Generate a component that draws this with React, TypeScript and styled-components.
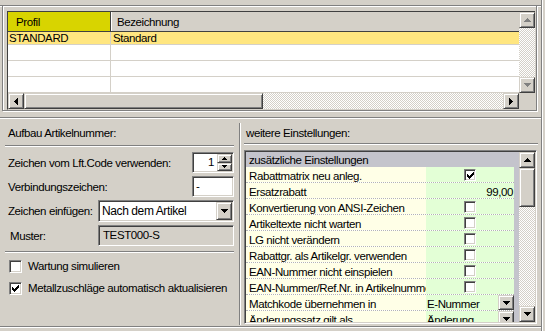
import React from "react";
import styled, { createGlobalStyle, css } from "styled-components";

const GlobalStyle = createGlobalStyle`
  *, *::before, *::after { box-sizing: border-box; }
  html, body { margin: 0; padding: 0; background: #d4d0c8; }
  body { font-family: "Liberation Sans", Arial, sans-serif; }
`;

// klassische Win-Rahmen
const raised = css`
  border: 1px solid;
  border-color: #d4d0c8 #404040 #404040 #d4d0c8;
  box-shadow: inset 1px 1px 0 #fff, inset -1px -1px 0 #808080;
  background: #d4d0c8;
`;

const sunken = css`
  border: 1px solid;
  border-color: #808080 #fff #fff #808080;
  box-shadow: inset 1px 1px 0 #404040, inset -1px -1px 0 #d4d0c8;
`;

const hatch = css`
  background: repeating-conic-gradient(#fff 0 25%, #d4d0c8 0 50%) 0 0 / 2px 2px;
`;

const Screen = styled.div`
  width: 545px;
  height: 331px;
  overflow: hidden;
  background: #d4d0c8;
  font-size: 11.5px;
  letter-spacing: -0.4px;
  color: #000;
`;

const Frame = styled.div`
  width: 542px;
  height: 331px;
  border-right: 1px solid #808080;
  box-shadow: 1px 0 0 #fff;
  display: flex;
  flex-direction: column;
`;

const TopStrip = styled.div`
  height: 6px;
  flex-shrink: 0;
  border-bottom: 1px solid #808080;
  box-shadow: 0 1px 0 #fff;
`;

const TopGroup = styled.div`
  margin-left: 2px;
  width: 535px;
  height: 105px;
  flex-shrink: 0;
  padding: 5px 1px 0 4px;
  border: 1px solid #808080;
  border-top: none;
  box-shadow: inset 1px 0 0 #fff, 1px 1px 0 #fff;
`;

const ProfileGrid = styled.div`
  width: 528px;
  height: 99px;
  display: flex;
  border-left: 1px solid #404040;
  border-top: 1px solid #404040;
  border-bottom: 1px solid #d4d0c8;
`;

const GridMain = styled.div`
  width: 511px;
  display: flex;
  flex-direction: column;
`;

const HeaderRow = styled.div`
  height: 20px;
  display: flex;
  border-bottom: 1px solid #404040;
`;

const HeaderCell = styled.div<{ $active?: boolean }>`
  display: flex;
  align-items: center;
  ${(p) =>
    p.$active
      ? css`
          width: 103px;
          padding-left: 8px;
          background: #d8d400;
          border-right: 1px solid #404040;
        `
      : css`
          flex: 1;
          padding-left: 6px;
          background: #d4d0c8;
          box-shadow: inset 1px 0 0 #fff;
        `}
`;

const DataRow = styled.div<{ $selected?: boolean; $h: number }>`
  height: ${(p) => p.$h}px;
  display: flex;
  background: ${(p) => (p.$selected ? "#ffe680" : "#fff")};
  border-bottom: 1px solid #d4d0c8;
`;

const DataCell = styled.div<{ $first?: boolean }>`
  line-height: 12px;
  white-space: nowrap;
  ${(p) =>
    p.$first
      ? css`
          width: 103px;
          padding-left: 1px;
          border-right: 1px solid #d4d0c8;
        `
      : css`
          flex: 1;
          padding-left: 2px;
        `}
`;

const HScroll = styled.div`
  height: 16px;
  display: flex;
`;

const ScrollBtn = styled.div`
  ${raised};
  width: 16px;
  height: 16px;
  flex-shrink: 0;
  display: flex;
  align-items: center;
  justify-content: center;
`;

const Thumb = styled.div<{ $len: number; $vertical?: boolean }>`
  ${raised};
  flex-shrink: 0;
  ${(p) => (p.$vertical ? `height: ${p.$len}px;` : `width: ${p.$len}px;`)}
`;

const Track = styled.div`
  ${hatch};
  flex: 1;
`;

const VScrollCol = styled.div`
  width: 16px;
  display: flex;
  flex-direction: column;
`;

const Corner = styled.div`
  height: 16px;
  background: #d4d0c8;
`;

const EtchedLine = styled.div<{ $top: number }>`
  margin-top: ${(p) => p.$top}px;
  height: 2px;
  flex-shrink: 0;
  border-top: 1px solid #808080;
  border-bottom: 1px solid #fff;
`;

const BottomSection = styled.div`
  height: 207px;
  flex-shrink: 0;
  display: flex;
`;

const LeftPanel = styled.div`
  width: 239px;
  padding: 7px 5px 0 5px;
  display: flex;
  flex-direction: column;
`;

const RightPanel = styled.div`
  flex: 1;
  padding: 7px 0 0 3px;
  display: flex;
  flex-direction: column;
`;

const VDivider = styled.div`
  width: 2px;
  margin: 4px 0 1px;
  border-left: 1px solid #808080;
  border-right: 1px solid #fff;
`;

const PanelTitle = styled.div<{ $indent: number }>`
  line-height: 14px;
  padding-left: ${(p) => p.$indent}px;
`;

const Separator = styled.div<{ $top: number; $width?: number }>`
  margin-top: ${(p) => p.$top}px;
  height: 2px;
  ${(p) => (p.$width ? `width: ${p.$width}px;` : "")}
  border-top: 1px solid #808080;
  border-bottom: 1px solid #fff;
`;

const Form = styled.div`
  margin-top: 5px;
  display: flex;
  flex-direction: column;
  gap: 3px;
`;

const FormRow = styled.div<{ $h: number }>`
  height: ${(p) => p.$h}px;
  display: flex;
  align-items: center;
  justify-content: space-between;
`;

const Label = styled.span<{ $indent?: number }>`
  padding-left: ${(p) => p.$indent ?? 3}px;
  white-space: nowrap;
`;

const SpinBox = styled.div`
  ${sunken};
  width: 42px;
  height: 21px;
  padding: 1px;
  background: #fff;
  display: flex;
`;

const SpinValue = styled.div`
  flex: 1;
  text-align: right;
  padding-right: 3px;
  line-height: 17px;
`;

const SpinButtons = styled.div`
  width: 15px;
  display: flex;
  flex-direction: column;
`;

const SpinBtn = styled.div`
  ${raised};
  flex: 1;
  display: flex;
  align-items: center;
  justify-content: center;
`;

const TextBox = styled.div<{ $width: number; $disabled?: boolean }>`
  ${sunken};
  width: ${(p) => p.$width}px;
  height: 21px;
  padding-left: ${(p) => (p.$disabled ? 4 : 3)}px;
  line-height: 19px;
  background: ${(p) => (p.$disabled ? "#d4d0c8" : "#fff")};
`;

const Combo = styled.div`
  ${sunken};
  width: 136px;
  height: 22px;
  padding: 1px;
  background: #fff;
  display: flex;
`;

const ComboText = styled.div`
  flex: 1;
  padding-left: 2px;
  line-height: 18px;
  font-size: 12px;
`;

const DropBtn = styled.div<{ $h: number }>`
  ${raised};
  width: 16px;
  height: ${(p) => p.$h}px;
  flex-shrink: 0;
  display: flex;
  align-items: center;
  justify-content: center;
`;

const CheckList = styled.div`
  margin-top: 2px;
  display: flex;
  flex-direction: column;
`;

const CheckRow = styled.div`
  height: 22px;
  padding-left: 4px;
  display: flex;
  align-items: center;
  gap: 6px;
  white-space: nowrap;
`;

const Box = styled.div<{ $size: number; $top?: number }>`
  ${sunken};
  width: ${(p) => p.$size}px;
  height: ${(p) => p.$size}px;
  margin-top: ${(p) => p.$top ?? 0}px;
  flex-shrink: 0;
  background: #fff;
  display: flex;
  align-items: center;
  justify-content: center;
`;

const SettingsGrid = styled.div`
  ${sunken};
  margin-top: 5px;
  width: 293px;
  height: 174px;
  padding: 1px;
  background: #c4c4cc;
  display: flex;
`;

const SettingsTable = styled.div`
  width: 268px;
  display: flex;
  flex-direction: column;
  overflow: hidden;
`;

const SettingsHeader = styled.div`
  height: 15px;
  flex-shrink: 0;
  padding-left: 3px;
  line-height: 17px;
  background: #c4c4cc;
  white-space: nowrap;
`;

const SettingsRow = styled.div`
  height: 16px;
  flex-shrink: 0;
  display: flex;
  background: #fff;
  border-bottom: 1px dotted #b4b4b4;
`;

const LabelCell = styled.div`
  width: 180px;
  padding-left: 3px;
  line-height: 19px;
  background: #ffffe7;
  white-space: nowrap;
  overflow: hidden;
`;

const ValueCell = styled.div<{ $kind: Kind }>`
  flex: 1;
  display: flex;
  align-items: flex-start;
  background: #e3ffd6;
  overflow: hidden;
  white-space: nowrap;
  line-height: 19px;
  justify-content: ${(p) =>
    p.$kind === "check" ? "center" : p.$kind === "number" ? "flex-end" : "space-between"};
  padding: ${(p) => (p.$kind === "number" ? "0 1px 0 0" : p.$kind === "select" ? "0 0 0 1px" : "0")};
`;

const Strip = styled.div`
  width: 5px;
`;

type Kind = "check" | "number" | "select";

type Setting = { label: string; kind: Kind; value?: string; checked?: boolean };

const settings: Setting[] = [
  { label: "Rabattmatrix neu anleg.", kind: "check", checked: true },
  { label: "Ersatzrabatt", kind: "number", value: "99,00" },
  { label: "Konvertierung von ANSI-Zeichen", kind: "check" },
  { label: "Artikeltexte nicht warten", kind: "check" },
  { label: "LG nicht verändern", kind: "check" },
  { label: "Rabattgr. als Artikelgr. verwenden", kind: "check" },
  { label: "EAN-Nummer nicht einspielen", kind: "check" },
  { label: "EAN-Nummer/Ref.Nr. in Artikelnummer", kind: "check" },
  { label: "Matchkode übernehmen in", kind: "select", value: "E-Nummer" },
  { label: "Änderungssatz gilt als", kind: "select", value: "Änderung" },
];

const profileRows = [
  { profil: "STANDARD", bez: "Standard", selected: true, h: 13 },
  { profil: "", bez: "", h: 16 },
  { profil: "", bez: "", h: 16 },
  { profil: "", bez: "", h: 16 },
];

// Pfeile pixelgenau
const arrowPaths = {
  up: { w: 7, h: 4, d: "M3 0h1v1h1v1h1v1h1v1H0V3h1V2h1V1h1z" },
  down: { w: 7, h: 4, d: "M0 0h7v1H6v1H5v1H4v1H3V3H2V2H1V1H0z" },
  left: { w: 4, h: 7, d: "M3 0h1v7H3V6H2V5H1V4H0V3h1V2h1V1h1z" },
  right: { w: 4, h: 7, d: "M0 0h1v1h1v1h1v1h1v1H3v1H2v1H1v1H0z" },
  upSmall: { w: 5, h: 3, d: "M2 0h1v1h1v1h1v1H0V2h1V1h1z" },
  downSmall: { w: 5, h: 3, d: "M0 0h5v1H4v1H3v1H2V2H1V1H0z" },
};

function Arrow({ dir, color = "#000" }: { dir: keyof typeof arrowPaths; color?: string }) {
  const a = arrowPaths[dir];
  return (
    <svg width={a.w} height={a.h} viewBox={`0 0 ${a.w} ${a.h}`} shapeRendering="crispEdges">
      <path d={a.d} fill={color} />
    </svg>
  );
}

function CheckMark() {
  return (
    <svg width="7" height="7" viewBox="0 0 7 7" shapeRendering="crispEdges">
      <path
        d="M6 0h1v3H6v1H5v1H4v1H3v1H2V6H1V5H0V2h1v1h1v1h1V3h1V2h1V1h1z"
        fill="#000"
      />
    </svg>
  );
}

function CheckBox({ checked, size = 13, top }: { checked?: boolean; size?: number; top?: number }) {
  return (
    <Box $size={size} $top={top}>
      {checked && <CheckMark />}
    </Box>
  );
}

export default function App() {
  return (
    <>
      <GlobalStyle />
      <Screen>
        <Frame>
          <TopStrip />
          <TopGroup>
            <ProfileGrid>
              <GridMain>
                <HeaderRow>
                  <HeaderCell $active>Profil</HeaderCell>
                  <HeaderCell>Bezeichnung</HeaderCell>
                </HeaderRow>
                {profileRows.map((r, i) => (
                  <DataRow key={i} $selected={r.selected} $h={r.h}>
                    <DataCell $first>{r.profil}</DataCell>
                    <DataCell>{r.bez}</DataCell>
                  </DataRow>
                ))}
                <HScroll>
                  <ScrollBtn>
                    <Arrow dir="left" />
                  </ScrollBtn>
                  <Thumb $len={239} />
                  <Track />
                  <ScrollBtn>
                    <Arrow dir="right" />
                  </ScrollBtn>
                </HScroll>
              </GridMain>
              <VScrollCol>
                <ScrollBtn>
                  <Arrow dir="up" color="#808080" />
                </ScrollBtn>
                <Track />
                <ScrollBtn>
                  <Arrow dir="down" color="#808080" />
                </ScrollBtn>
                <Corner />
              </VScrollCol>
            </ProfileGrid>
          </TopGroup>

          <EtchedLine $top={6} />

          <BottomSection>
            <LeftPanel>
              <PanelTitle $indent={3}>Aufbau Artikelnummer:</PanelTitle>
              <Separator $top={5} />
              <Form>
                <FormRow $h={21}>
                  <Label>Zeichen vom Lft.Code verwenden:</Label>
                  <SpinBox>
                    <SpinValue>1</SpinValue>
                    <SpinButtons>
                      <SpinBtn>
                        <Arrow dir="upSmall" />
                      </SpinBtn>
                      <SpinBtn>
                        <Arrow dir="downSmall" />
                      </SpinBtn>
                    </SpinButtons>
                  </SpinBox>
                </FormRow>
                <FormRow $h={21}>
                  <Label>Verbindungszeichen:</Label>
                  <TextBox $width={42}>-</TextBox>
                </FormRow>
                <FormRow $h={22}>
                  <Label>Zeichen einfügen:</Label>
                  <Combo>
                    <ComboText>Nach dem Artikel</ComboText>
                    <DropBtn $h={18}>
                      <Arrow dir="down" />
                    </DropBtn>
                  </Combo>
                </FormRow>
                <FormRow $h={21}>
                  <Label $indent={5}>Muster:</Label>
                  <TextBox $width={136} $disabled>
                    TEST000-S
                  </TextBox>
                </FormRow>
              </Form>
              <Separator $top={5} />
              <CheckList>
                <CheckRow>
                  <CheckBox />
                  Wartung simulieren
                </CheckRow>
                <CheckRow>
                  <CheckBox checked />
                  Metallzuschläge automatisch aktualisieren
                </CheckRow>
              </CheckList>
            </LeftPanel>

            <VDivider />

            <RightPanel>
              <PanelTitle $indent={2}>weitere Einstellungen:</PanelTitle>
              <Separator $top={3} $width={294} />
              <SettingsGrid>
                <SettingsTable>
                  <SettingsHeader>zusätzliche Einstellungen</SettingsHeader>
                  {settings.map((s) => (
                    <SettingsRow key={s.label}>
                      <LabelCell>{s.label}</LabelCell>
                      <ValueCell $kind={s.kind}>
                        {s.kind === "check" && <CheckBox checked={s.checked} size={12} top={2} />}
                        {s.kind === "number" && s.value}
                        {s.kind === "select" && (
                          <>
                            <span>{s.value}</span>
                            <DropBtn $h={15}>
                              <Arrow dir="down" />
                            </DropBtn>
                          </>
                        )}
                      </ValueCell>
                    </SettingsRow>
                  ))}
                </SettingsTable>
                <Strip />
                <VScrollCol>
                  <ScrollBtn>
                    <Arrow dir="up" />
                  </ScrollBtn>
                  <Thumb $len={39} $vertical />
                  <Track />
                  <ScrollBtn>
                    <Arrow dir="down" />
                  </ScrollBtn>
                </VScrollCol>
              </SettingsGrid>
            </RightPanel>
          </BottomSection>

          <EtchedLine $top={0} />
        </Frame>
      </Screen>
    </>
  );
}
